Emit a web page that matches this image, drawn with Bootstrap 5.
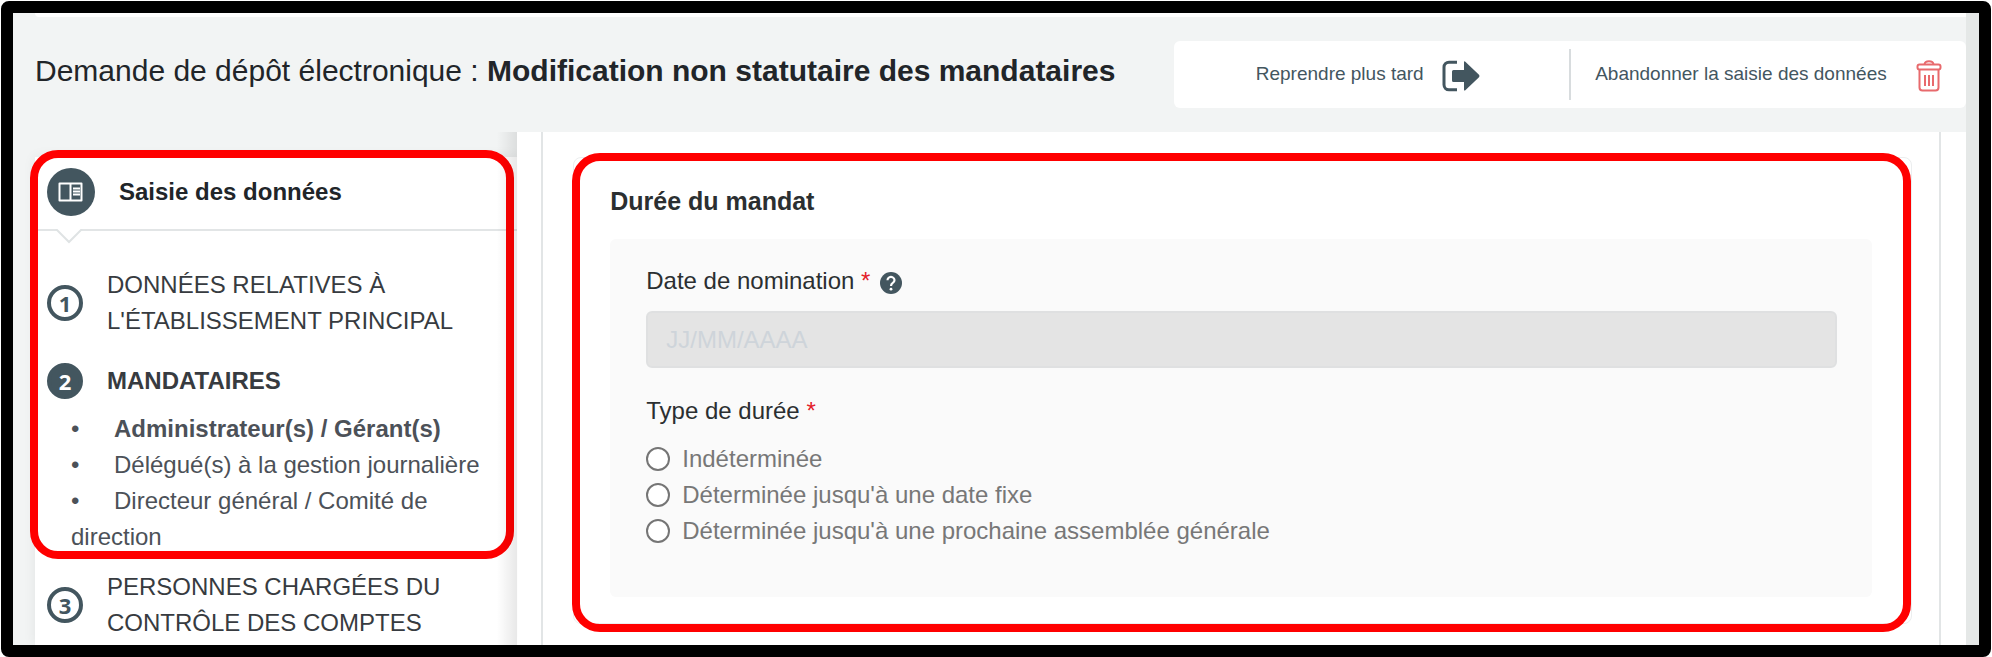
<!DOCTYPE html>
<html lang="fr">
<head>
<meta charset="utf-8">
<meta name="viewport" content="width=device-width, initial-scale=1">
<title>Modification non statutaire des mandataires</title>
<link href="https://cdn.jsdelivr.net/npm/bootstrap@5.3.0/dist/css/bootstrap.min.css" rel="stylesheet">
<style>
:root { --slate: #43565f; --fog: #f2f4f4; --line: #e2e5e6; }
body { font-family: "Liberation Sans", Arial, sans-serif; font-size: 24px; line-height: 36px; color: #212529; background: #fff; padding: 1px 1px 0; }
.frame { border: 12px solid #000; border-radius: 8px; min-height: calc(100vh - 1px); background: var(--fog); }
.rail { flex: 0 0 13px; background: #e5e8e7; }
.topstrip { height: 4px; margin-left: 22px; border-radius: 0 0 0 4px; background: #fff; }
.pagehead { height: 115px; padding: 24px 0 24px 22px; gap: 24px; }
.pagehead h1 { font-size: 30px; line-height: 36px; margin: 12px 0 0; font-weight: 400; }
.actions { flex: 0 0 41%; height: 67px; background: #fff; border-radius: 6px; }
.actions button { flex: 1 1 50%; border: 0; background: none; color: var(--slate); font-size: 19px; line-height: 24px; padding: 4px 24px 2px; gap: 18px; }
.actions button:first-child { padding-right: 32px; }
.actions .sep { width: 2px; height: 51px; background: #d8dcde; }
.cols { display: grid; grid-template-columns: minmax(0, 504fr) minmax(0, 1448fr); }
.side { padding: 25px 0 0 22px; position: relative; }
.side::after { content: ""; position: absolute; top: 0; right: 0; bottom: 0; width: 20px; background: linear-gradient(to right, transparent, rgba(0,0,0,.09)); pointer-events: none; }
.sidebody { background: #fff; box-shadow: 0 0 12px rgba(0,0,0,.07); clip-path: inset(-12px 0 0 -12px); }
.mark-box { position: relative; }
.mark-box::before { content: ""; position: absolute; z-index: 2; border: 8px solid #f00; border-radius: 28px; pointer-events: none; }
.mark-side::before { inset: -7px 3px -4px -5px; }
.mark-main::before { inset: -5px 0 -9px -2px; }
.sidehead { height: 74px; padding: 0 12px 2px; gap: 24px; font-weight: 700; border-bottom: 2px solid var(--line); position: relative; }
.caret { position: absolute; left: 20px; bottom: -15px; }
.stepicon { width: 36px; height: 36px; flex: none; border: 4px solid var(--slate); border-radius: 50%; color: var(--slate); font: 700 22px/28px "Noto Sans", sans-serif; text-align: center; }
.stepicon.on { background: var(--slate); color: #fff; }
.step { padding: 0 12px; gap: 24px; color: #373b40; text-decoration: none; }
.step-first { padding: 36px 0 24px 12px; }
.step-next { padding-top: 14px; }
.sub { padding-left: 36px; margin: 0; color: #4c5158; list-style: none; }
.sub a { color: inherit; text-decoration: none; }
.sub li::before { content: "•"; display: inline-block; width: 43px; }
.content { background: #fff; padding: 0 25px 0 24px; }
.inner { border: solid var(--line); border-width: 0 2px; padding: 25px 27px 21px 30px; height: 100%; }
.cardbox { border: 1px solid #eceeef; border-radius: 8px; padding: 25px 39px 26px 36px; color: #2b2f31; }
.cardbox h2 { font-size: 25px; line-height: 36px; font-weight: 700; margin: 0 0 20px; }
.fieldpanel { background: #fafafa; border-radius: 6px; padding: 24px 35px 48px 36px; }
.fieldpanel legend { font-size: 24px; line-height: 36px; margin: 0 0 12px; }
.req { color: #e3202a; }
.datebox { height: 57px; font-size: 24px; background: #e4e4e4; border: 2px solid #dfe0e1; border-radius: 6px; padding: 0 18px; margin: 12px 0 25px; }
.datebox:disabled { background: #e4e4e4; }
.datebox::placeholder { color: #ced4da; }
.choice { gap: 12px; color: #777; }
.choice input { appearance: none; width: 24px; height: 24px; margin: 0; border: 2px solid #757575; border-radius: 50%; background: #fff; }
.choice input:checked { box-shadow: inset 0 0 0 4px #fff; background: var(--slate); }
</style>
</head>
<body>
<div class="frame d-flex overflow-hidden">
  <div class="flex-grow-1 d-flex flex-column">
    <div class="topstrip"></div>
    <header class="pagehead d-flex align-items-start justify-content-between">
      <h1>Demande de dépôt électronique : <strong>Modification non statutaire des mandataires</strong></h1>
      <div class="actions d-flex align-items-center">
        <button type="button" class="d-flex align-items-center justify-content-center">
          <span class="pb-1">Reprendre plus tard</span>
          <svg width="38" height="32" viewBox="0 0 38 32" aria-hidden="true"><path d="M15 2.200H7a5 5 0 0 0-5 5v17.600a5 5 0 0 0 5 5h8" fill="none" stroke="#43565f" stroke-width="3"/><path d="M10 11.500q0-1.500 1.500-1.500H22V2.500q0-2 1.600-.6L37 14.800q1 1.200 0 2.400L23.600 30q-1.600 1.400-1.600-.6V22H11.500q-1.500 0-1.500-1.500z" fill="#43565f"/></svg>
        </button>
        <div class="sep"></div>
        <button type="button" class="d-flex align-items-center justify-content-between">
          <span class="pb-1">Abandonner la saisie des données</span>
          <svg width="26" height="32" viewBox="0 0 26 32" fill="none" stroke="#e86a6d" stroke-width="2" aria-hidden="true"><rect x="1.500" y="4.500" width="23" height="5" rx="2"/><path d="M8.500 4.500C9 .2 17 .2 17.500 4.500M3.500 9.500V27.500q0 3 3 3h13q3 0 3-3V9.500M9 15v11M13 15v11M17 15v11"/></svg>
        </button>
      </div>
    </header>

    <div class="cols flex-grow-1">
      <nav class="side d-flex flex-column" aria-label="Étapes">
        <div class="sidebody flex-grow-1">
          <div class="mark-box mark-side">
            <div class="sidehead d-flex align-items-center">
              <svg width="48" height="48" viewBox="0 0 48 48" aria-hidden="true"><circle cx="24" cy="24" r="24" fill="#43565f"/><path d="M12.500 15.500h22v17h-22zM23.500 15.500v17" fill="none" stroke="#fff" stroke-width="2" stroke-linejoin="round"/><path d="M26 20.500h7M26 23.500h7M26 26.500h7" stroke="#fff" stroke-width="2"/></svg>
              <span>Saisie des données</span>
              <svg class="caret" width="28" height="15" viewBox="0 0 28 15" aria-hidden="true"><path d="M1 0 14 13 27 0" fill="#fff" stroke="#dfe3e4" stroke-width="2"/></svg>
            </div>
            <a href="#" class="step step-first d-flex align-items-center">
              <span class="stepicon">1</span><span>DONNÉES RELATIVES À L'ÉTABLISSEMENT PRINCIPAL</span>
            </a>
            <a href="#" class="step d-flex align-items-center fw-bold pb-2 mb-1" aria-current="step">
              <span class="stepicon on">2</span><span>MANDATAIRES</span>
            </a>
            <ul class="sub">
              <li><a href="#" class="fw-bold">Administrateur(s) / Gérant(s)</a></li>
              <li><a href="#">Délégué(s) à la gestion journalière</a></li>
              <li><a href="#">Directeur général / Comité de direction</a></li>
            </ul>
          </div>
          <a href="#" class="step step-next d-flex align-items-center">
            <span class="stepicon">3</span><span>PERSONNES CHARGÉES DU CONTRÔLE DES COMPTES</span>
          </a>
        </div>
      </nav>

      <main class="content">
        <div class="inner">
          <section class="cardbox mark-box mark-main">
            <h2>Durée du mandat</h2>
            <div class="fieldpanel">
              <div class="d-flex align-items-center">
                <label for="date">Date de nomination <span class="req">*</span></label>
                <svg class="ms-2 mt-1" width="24" height="24" viewBox="0 0 24 24" role="img" aria-label="Aide"><circle cx="13" cy="12" r="11" fill="#43565f"/><path d="M9.500 9.200a3.500 3.200 0 1 1 5.300 2.700q-1.800 1.200-1.800 3" fill="none" stroke="#fff" stroke-width="2.200"/><circle cx="13" cy="18.200" r="1.400" fill="#fff"/></svg>
              </div>
              <input id="date" type="text" class="datebox form-control" placeholder="JJ/MM/AAAA" disabled>
              <fieldset>
                <legend>Type de durée <span class="req">*</span></legend>
                <label class="choice d-flex align-items-center"><input type="radio" name="duree">Indéterminée</label>
                <label class="choice d-flex align-items-center"><input type="radio" name="duree">Déterminée jusqu'à une date fixe</label>
                <label class="choice d-flex align-items-center"><input type="radio" name="duree">Déterminée jusqu'à une prochaine assemblée générale</label>
              </fieldset>
            </div>
          </section>
        </div>
      </main>
    </div>
  </div>
  <div class="rail"></div>
</div>
<script src="https://cdn.jsdelivr.net/npm/bootstrap@5.3.0/dist/js/bootstrap.bundle.min.js"></script>
</body>
</html>
